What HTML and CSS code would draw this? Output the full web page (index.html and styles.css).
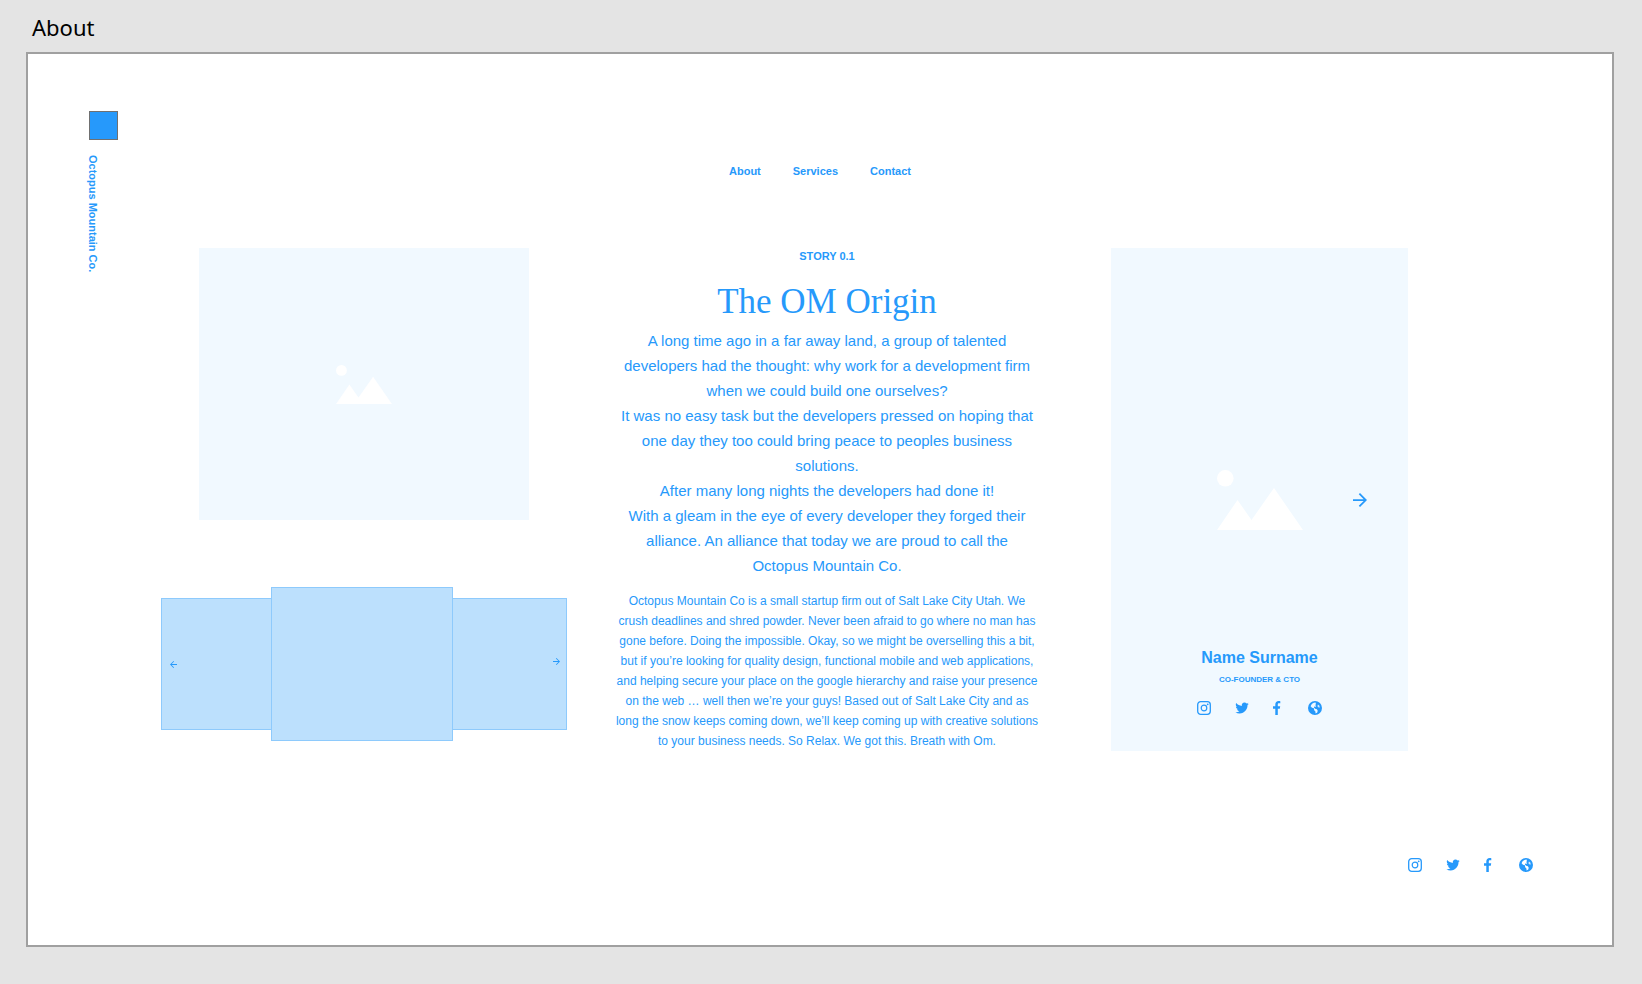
FILE: index.html
```html
<!DOCTYPE html>
<html lang="en">
<head>
<meta charset="utf-8">
<meta name="viewport" content="width=device-width, initial-scale=1">
<title>About</title>
<link rel="stylesheet" href="styles.css">
</head>
<body class="canvas">
<svg width="0" height="0" class="sprite" aria-hidden="true">
  <symbol id="instagram" viewBox="0 0 14 14">
    <rect x="0.7" y="0.7" width="12.6" height="12.6" rx="3" fill="none" stroke="currentColor" stroke-width="1.3"/>
    <circle cx="7" cy="7" r="2.8" fill="none" stroke="currentColor" stroke-width="1.2"/>
    <circle cx="10.7" cy="3.3" r="0.9" fill="currentColor"/>
  </symbol>
  <symbol id="twitter" viewBox="0 0 24 24">
    <path fill="currentColor" d="M23.6 4.9c-.8.4-1.7.7-2.7.8 1-.6 1.7-1.500 2-2.600-.9.500-1.900.900-3 1.100a4.700 4.700 0 0 0-8.100 4.300C7.900 8.300 4.500 6.500 2.200 3.600a4.700 4.700 0 0 0 1.500 6.300c-.8 0-1.500-.2-2.100-.6v.1c0 2.300 1.600 4.200 3.800 4.600-.7.200-1.400.2-2.100.1.600 1.900 2.300 3.200 4.400 3.300A9.500 9.500 0 0 1 .7 19.300a13.400 13.400 0 0 0 7.200 2.100c8.700 0 13.500-7.200 13.500-13.500v-.6c.9-.7 1.700-1.500 2.200-2.400z"/>
  </symbol>
  <symbol id="facebook" viewBox="0 0 11 14">
    <path fill="currentColor" d="M2.300 14V7.700H0V5.200h2.300V3.600C2.300 1.300 3.600 0 5.700 0c.7 0 1.300.1 1.600.2v2.100H6c-1 0-1.200.5-1.200 1.200v1.700h2.400l-.4 2.500H4.800V14z"/>
  </symbol>
  <symbol id="globe" viewBox="0 0 14 14">
    <path fill="currentColor" fill-rule="evenodd" d="M7 0a7 7 0 1 0 0 14A7 7 0 0 0 7 0zM7.600 1.500C5.200 1.500 3.300 3 2.600 5.200L4 6.700 5.900 7.300 6.200 9.300 7.400 10.600 7.600 12.500 9.300 11.600 9.700 9.700 8.900 8.300 7.100 7.700 5.900 6.400 6.300 5.500 7.800 5.800 8.200 4.700 7 4.200 7.900 3.200z"/>
    <path fill="#fff" d="M9.900 3.400 11.300 4.600 11.800 6.400 10.600 6.500 9.400 5.300z" opacity="0.8"/>
  </symbol>
  <symbol id="arrow" viewBox="4 4 16 16">
    <path fill="currentColor" d="M12 4l-1.410 1.410L16.170 11H4v2h12.170l-5.580 5.590L12 20l8-8z"/>
  </symbol>
  <symbol id="picture" viewBox="0 0 86 60">
    <circle cx="8.300" cy="8.300" r="8.300" fill="#fff"/>
    <path fill="#fff" d="M0 60 20.500 30 34.500 50 57 18 86 60z"/>
  </symbol>
</svg>

<h1 class="artboard-name">About</h1>

<div class="artboard">
  <aside class="brand">
    <div class="brand-mark"></div>
    <p class="brand-name">Octopus Mountain Co.</p>
  </aside>

  <div class="content">
    <nav class="nav" aria-label="Main">
      <a class="nav-link" href="#about">About</a>
      <a class="nav-link" href="#services">Services</a>
      <a class="nav-link" href="#contact">Contact</a>
    </nav>

    <main class="columns">
      <section class="media" aria-label="Gallery">
        <div class="photo"><svg class="photo-icon"><use href="#picture"/></svg></div>
        <div class="carousel">
          <div class="slide slide-prev">
            <button class="slide-button" type="button" aria-label="Previous"><svg class="arrow-small arrow-back"><use href="#arrow"/></svg></button>
          </div>
          <div class="slide slide-current"></div>
          <div class="slide slide-next">
            <button class="slide-button" type="button" aria-label="Next"><svg class="arrow-small"><use href="#arrow"/></svg></button>
          </div>
        </div>
      </section>

      <article class="story">
        <p class="story-label">STORY 0.1</p>
        <h2 class="story-title">The OM Origin</h2>
        <div class="story-lead">
          <p>A long time ago in a far away land, a group of talented developers had the thought: why work for a development firm when we could build one ourselves?</p>
          <p>It was no easy task but the developers pressed on hoping that one day they too could bring peace to peoples business solutions.</p>
          <p>After many long nights the developers had done it!</p>
          <p>With a gleam in the eye of every developer they forged their alliance. An alliance that today we are proud to call the Octopus Mountain Co.</p>
        </div>
        <p class="story-text">Octopus Mountain Co is a small startup firm out of Salt Lake City Utah. We crush deadlines and shred powder. Never been afraid to go where no man has gone before. Doing the impossible. Okay, so we might be overselling this a bit, but if you’re looking for quality design, functional mobile and web applications, and helping secure your place on the google hierarchy and raise your presence on the web … well then we’re your guys! Based out of Salt Lake City and as long the snow keeps coming down, we’ll keep coming up with creative solutions to your business needs. So Relax. We got this. Breath with Om.</p>
      </article>

      <section class="member" aria-label="Team member">
        <svg class="member-icon"><use href="#picture"/></svg>
        <button class="member-next" type="button" aria-label="Next team member"><svg class="arrow"><use href="#arrow"/></svg></button>
        <div class="member-details">
          <h3 class="member-name">Name Surname</h3>
          <p class="member-role">CO-FOUNDER &amp; CTO</p>
          <div class="social">
            <a class="social-link" href="#instagram" aria-label="Instagram"><svg class="icon"><use href="#instagram"/></svg></a>
            <a class="social-link" href="#twitter" aria-label="Twitter"><svg class="icon"><use href="#twitter"/></svg></a>
            <a class="social-link" href="#facebook" aria-label="Facebook"><svg class="icon icon-narrow"><use href="#facebook"/></svg></a>
            <a class="social-link" href="#globe" aria-label="Website"><svg class="icon"><use href="#globe"/></svg></a>
          </div>
        </div>
      </section>
    </main>
  </div>

  <footer class="footer">
    <div class="social">
      <a class="social-link" href="#instagram" aria-label="Instagram"><svg class="icon"><use href="#instagram"/></svg></a>
      <a class="social-link" href="#twitter" aria-label="Twitter"><svg class="icon"><use href="#twitter"/></svg></a>
      <a class="social-link" href="#facebook" aria-label="Facebook"><svg class="icon icon-narrow"><use href="#facebook"/></svg></a>
      <a class="social-link" href="#globe" aria-label="Website"><svg class="icon"><use href="#globe"/></svg></a>
    </div>
  </footer>
</div>
</body>
</html>
```
FILE: styles.css
```css
:root {
  --blue: #2699fb;
  --pale: #f1f9ff;
  --slide: #bce0fd;
  --slide-edge: #8ecafc;
}

* {
  box-sizing: border-box;
}

h1, h2, h3, p {
  margin: 0;
  font-weight: inherit;
}

svg {
  display: block;
}

button {
  padding: 0;
  border: 0;
  background: none;
  color: inherit;
  cursor: pointer;
}

.canvas {
  display: flex;
  flex-direction: column;
  min-height: 100vh;
  margin: 0;
  padding: 12px 28px 37px 26px;
  background: #e4e4e4;
  color: var(--blue);
  font-family: "Liberation Sans", Arial, sans-serif;
}

.sprite {
  position: absolute;
}

.artboard-name {
  padding: 0 6px 10px;
  color: #000;
  font: 22px/30px "Noto Sans", sans-serif;
}

.artboard {
  flex: 1;
  display: grid;
  grid-template-columns: 133px minmax(0, 1fr);
  grid-template-rows: auto 1fr;
  border: 2px solid #a0a0a0;
  background: #fff;
}

.brand {
  padding: 57px 0 0 61px;
}

.brand-mark {
  width: 29px;
  height: 29px;
  border: 1px solid #707070;
  background: var(--blue);
}

.brand-name {
  margin-top: 15px;
  font-size: 11px;
  font-weight: bold;
  line-height: 8px;
  writing-mode: vertical-rl;
}

.content {
  padding: 109px 133px 0 0;
}

.nav {
  display: flex;
  justify-content: center;
  gap: 32px;
}

.nav-link {
  color: inherit;
  font-size: 11px;
  font-weight: bold;
  line-height: 16px;
  text-decoration: none;
}

.columns {
  display: grid;
  grid-template-columns: minmax(0, 406fr) minmax(0, 424fr) minmax(0, 321fr);
  column-gap: 48px;
  margin-top: 69px;
  padding-right: 71px;
}

.media {
  display: flex;
  flex-direction: column;
  gap: 67px;
}

.photo {
  display: flex;
  align-items: center;
  justify-content: center;
  height: 272px;
  margin: 0 38px;
  background: var(--pale);
}

.photo-icon {
  width: 56px;
  height: 39px;
}

.carousel {
  display: grid;
  grid-template-columns: 110fr 182fr 114fr;
  align-items: center;
}

.slide {
  display: flex;
  align-items: center;
  height: 132px;
  border: 1px solid var(--slide-edge);
  background: var(--slide);
}

.slide-prev {
  border-right: 0;
  padding-left: 8px;
}

.slide-current {
  height: 154px;
}

.slide-next {
  justify-content: flex-end;
  border-left: 0;
  padding: 0 6px 6px 0;
}

.arrow-small {
  width: 7px;
  height: 7px;
}

.arrow-back {
  transform: rotate(180deg);
}

.story {
  text-align: center;
}

.story-label {
  font-size: 11px;
  font-weight: bold;
  line-height: 16px;
}

.story-title {
  margin: 18px 0 6px;
  font: 35px/40px "Liberation Serif", Georgia, serif;
}

.story-lead {
  padding: 0 4px;
  font-size: 15px;
  line-height: 25px;
}

.story-text {
  margin-top: 13px;
  font-size: 12px;
  line-height: 20px;
}

.member {
  display: grid;
  min-height: 503px;
  margin-left: 24px;
  background: var(--pale);
}

.member-icon,
.member-next,
.member-details {
  grid-area: 1 / 1;
}

.member-icon {
  place-self: center;
  width: 86px;
  height: 60px;
}

.member-next {
  place-self: center end;
  margin-right: 41px;
}

.arrow {
  width: 14px;
  height: 14px;
}

.member-details {
  align-self: end;
  padding-bottom: 36px;
  text-align: center;
}

.member-name {
  font-size: 16px;
  font-weight: bold;
  line-height: 20px;
}

.member-role {
  margin: 6px 0 15px;
  font-size: 8px;
  font-weight: bold;
  line-height: 12px;
}

.social {
  display: flex;
  justify-content: center;
  gap: 24px;
}

.social-link {
  color: inherit;
}

.icon {
  width: 14px;
  height: 14px;
}

.icon-narrow {
  width: 11px;
}

.footer {
  grid-column: 1 / -1;
  display: flex;
  align-items: flex-start;
  justify-content: flex-end;
  padding: 107px 79px 73px;
}
```
